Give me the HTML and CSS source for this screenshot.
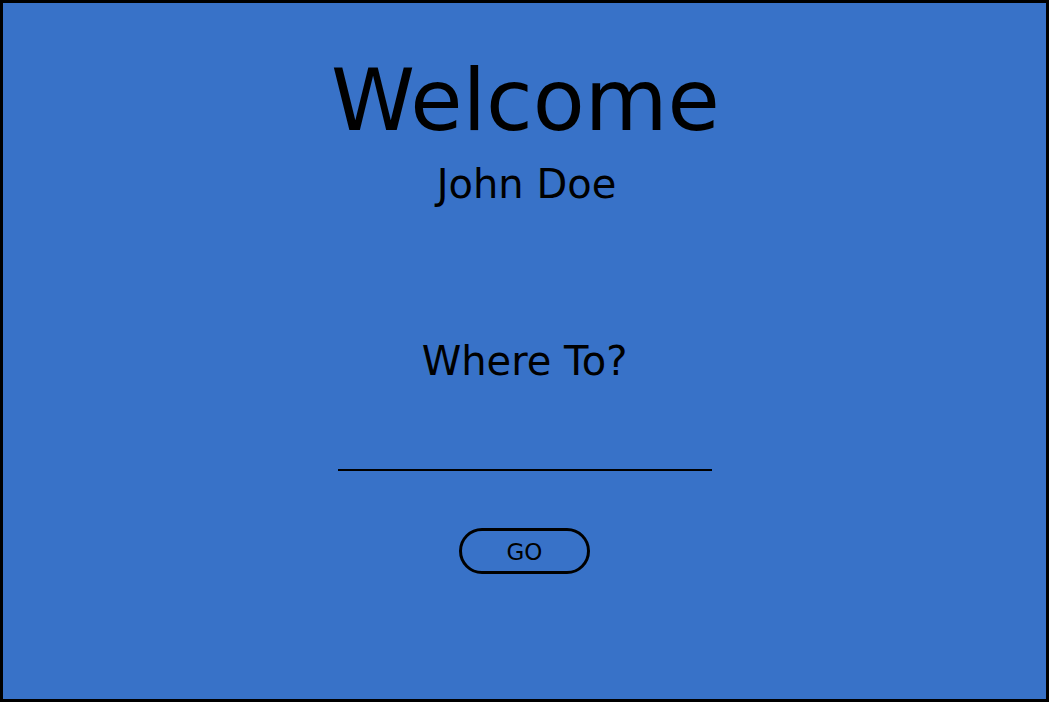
FILE: index.html
```html
<!DOCTYPE html>
<html>
<head>
<meta charset="utf-8">
<link rel="stylesheet" href="styles.css">
</head>
<body>
<main class="screen">
  <h1 class="title">Welcome</h1>
  <p class="user">John Doe</p>
  <p class="prompt">Where To?</p>
  <div class="field"></div>
  <button class="go">GO</button>
</main>
</body>
</html>
```
FILE: styles.css
```css
html, body {
  margin: 0;
  padding: 0;
  width: 1049px;
  height: 702px;
  overflow: hidden;
}
.screen {
  box-sizing: border-box;
  width: 1049px;
  height: 702px;
  background: #3872c8;
  border: 3px solid #000;
  display: flex;
  flex-direction: column;
  align-items: center;
  font-family: "DejaVu Sans", sans-serif;
  color: #000;
}
.title {
  margin: 48px 0 0;
  padding-left: 2px;
  font-size: 85px;
  font-weight: normal;
  line-height: 100px;
}
.user {
  margin: 9px 0 0;
  padding-left: 4px;
  font-size: 40px;
  line-height: 48px;
}
.prompt {
  margin: 129px 0 0;
  font-size: 40px;
  line-height: 48px;
}
.field {
  margin-top: 84px;
  width: 374px;
  height: 2px;
  background: #000;
}
.go {
  margin-top: 57px;
  box-sizing: border-box;
  width: 131px;
  height: 46px;
  border: 3px solid #000;
  border-radius: 23px;
  background: transparent;
  font-family: "DejaVu Sans", sans-serif;
  font-size: 23px;
  line-height: 1;
  padding: 2px 0 0;
  color: #000;
}
```
